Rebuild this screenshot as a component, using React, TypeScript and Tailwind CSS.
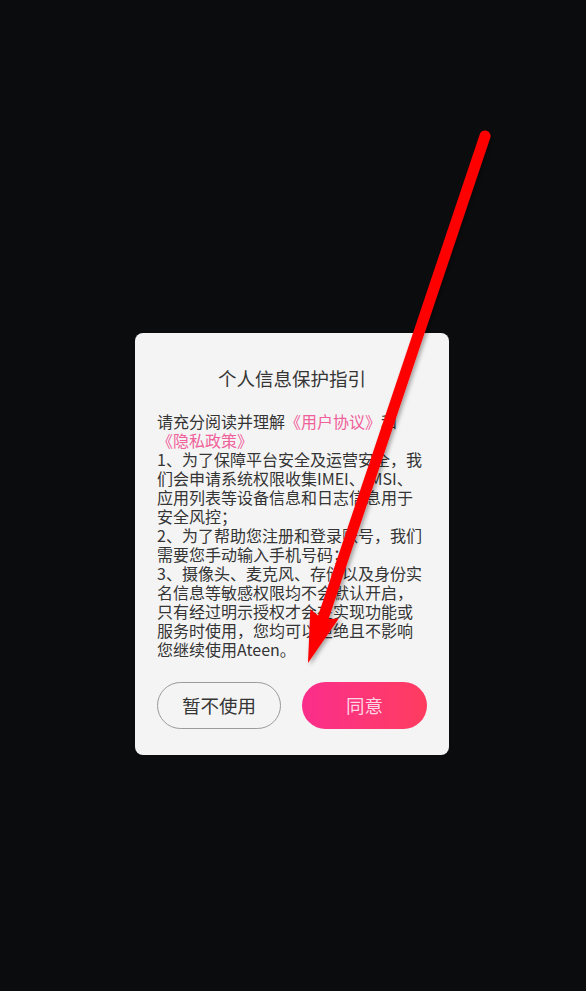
import React from "react";

const lines: React.ReactNode[] = [
  <>请充分阅读并理解<span className="text-[#f0609a]">《用户协议》</span>和</>,
  <span className="text-[#f0609a]">《隐私政策》</span>,
  "1、为了保障平台安全及运营安全，我",
  "们会申请系统权限收集IMEI、IMSI、",
  "应用列表等设备信息和日志信息用于",
  "安全风控；",
  "2、为了帮助您注册和登录账号，我们",
  "需要您手动输入手机号码；",
  "3、摄像头、麦克风、存储以及身份实",
  "名信息等敏感权限均不会默认开启，",
  "只有经过明示授权才会在实现功能或",
  "服务时使用，您均可以拒绝且不影响",
  "您继续使用Ateen。",
];

function Arrow() {
  const tip = { x: 308, y: 663 };
  const start = { x: 485, y: 136 };
  const dx = tip.x - start.x;
  const dy = tip.y - start.y;
  const len = Math.hypot(dx, dy);
  const ux = dx / len;
  const uy = dy / len;
  const px = -uy;
  const py = ux;
  const hl = 52;
  const hw = 15;
  const bx = tip.x - ux * hl;
  const by = tip.y - uy * hl;
  const pts = `${tip.x},${tip.y} ${bx + px * hw},${by + py * hw} ${bx + ux * 6},${by + uy * 6} ${bx - px * hw},${by - py * hw}`;
  return (
    <svg className="absolute left-0 top-0 pointer-events-none" width="586" height="991" viewBox="0 0 586 991">
      <defs>
        <filter id="sh" x="-20%" y="-20%" width="140%" height="140%">
          <feDropShadow dx="2" dy="2" stdDeviation="2" floodColor="#000" floodOpacity="0.35" />
        </filter>
      </defs>
      <g filter="url(#sh)">
        <line x1={start.x} y1={start.y} x2={bx + ux * 8} y2={by + uy * 8} stroke="#ff0000" strokeWidth="11" strokeLinecap="round" />
        <polygon points={pts} fill="#ff0000" />
      </g>
    </svg>
  );
}

export default function App() {
  return (
    <div
      className="relative w-[586px] h-[991px] bg-[#0b0c0e] overflow-hidden"
      style={{ fontFamily: '"Noto Sans CJK SC", "Noto Sans", sans-serif' }}
    >
      <div className="pt-[333px] pl-[135px]">
        <div className="w-[314px] rounded-[8px] bg-[#f4f4f4] px-[22px] pt-[33px] pb-[26px]">
          <div className="text-center text-[18.5px] leading-[24px] text-[#353535]">个人信息保护指引</div>
          <div className="mt-[22px] text-[16px] leading-[19px] text-[#353535]">
            {lines.map((l, i) => (
              <div key={i} className="whitespace-nowrap">{l}</div>
            ))}
          </div>
          <div className="mt-[23px] flex gap-[21px]">
            <button className="w-[124px] h-[47px] rounded-full border border-[#9a9a9a] text-[18.5px] text-[#353535] flex items-center justify-center">
              暂不使用
            </button>
            <button className="w-[125px] h-[47px] rounded-full bg-gradient-to-r from-[#fb2d8b] to-[#ff3c5f] text-[18.5px] text-[#fcd6e4] flex items-center justify-center">
              同意
            </button>
          </div>
        </div>
      </div>
      <Arrow />
    </div>
  );
}
